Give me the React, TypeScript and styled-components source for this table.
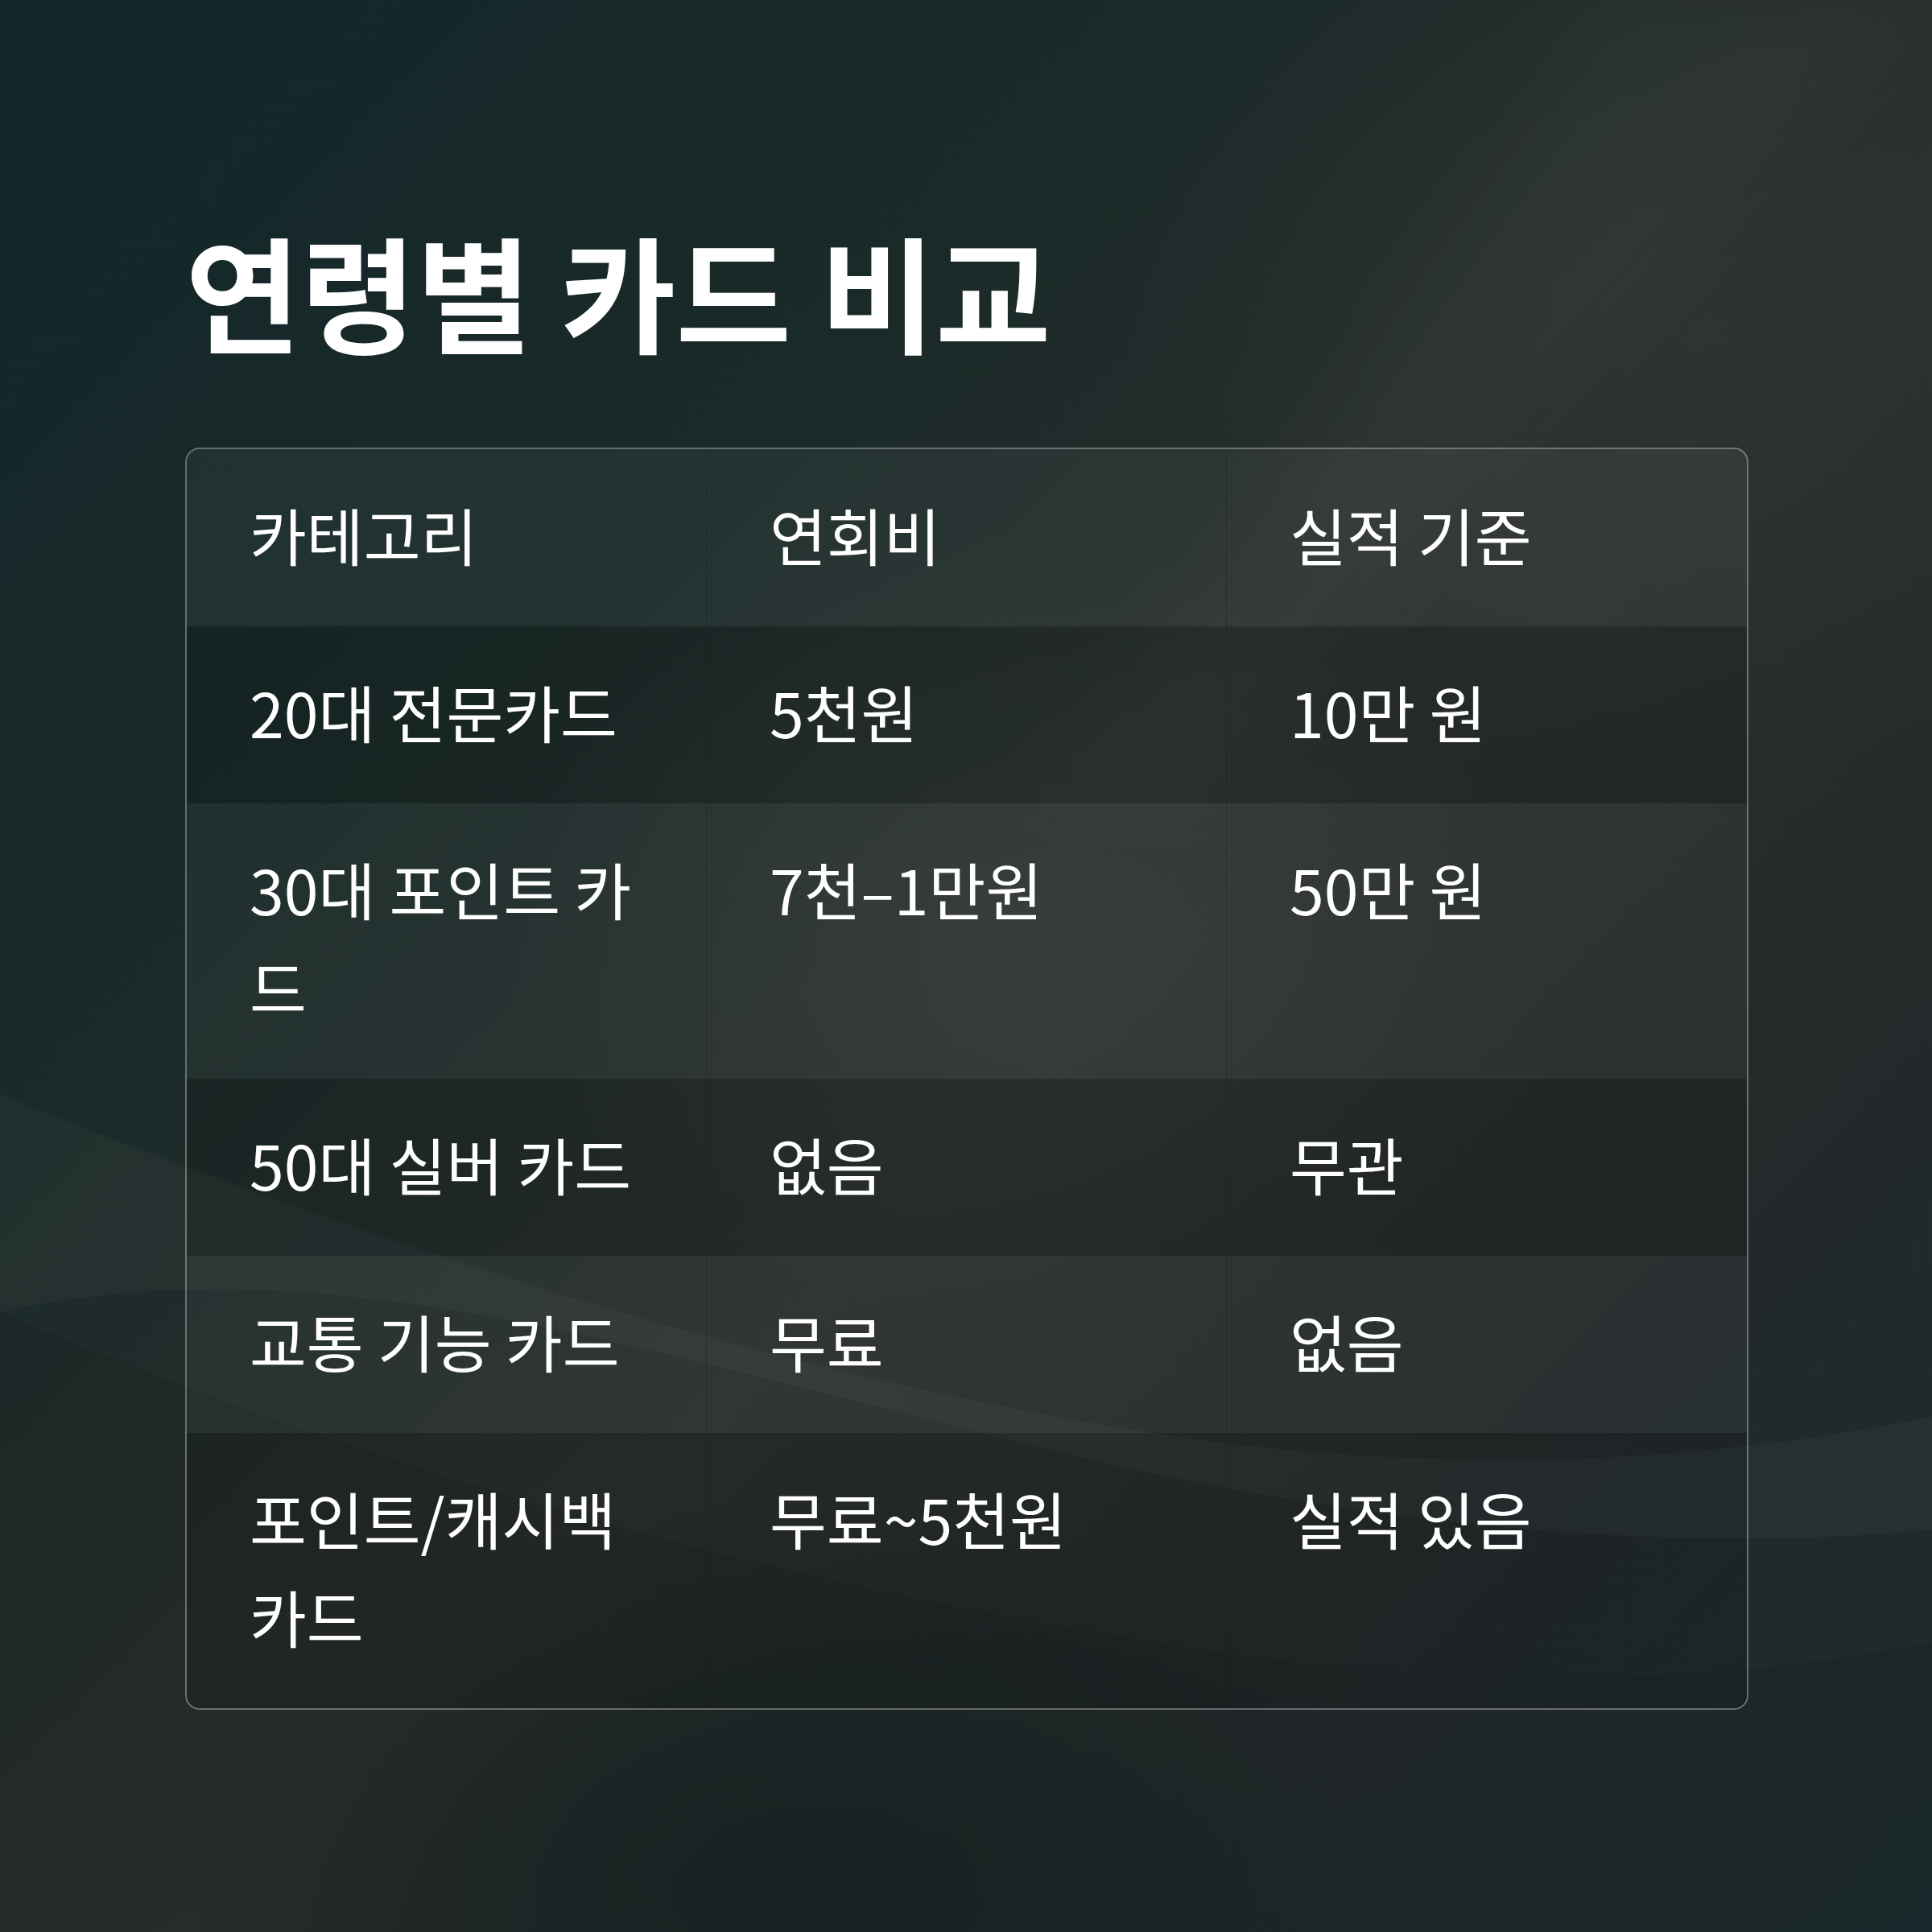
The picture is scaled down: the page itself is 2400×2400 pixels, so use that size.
import React from "react";
import styled, { createGlobalStyle } from "styled-components";

const GlobalStyle = createGlobalStyle`
  html, body { margin: 0; padding: 0; background: #172425; }
  * { box-sizing: border-box; }
`;

const Page = styled.div`
  position: relative;
  width: 2400px;
  height: 2400px;
  overflow: hidden;
  background:
    radial-gradient(ellipse 900px 700px at 1250px 1150px, rgba(70, 72, 72, 0.3), transparent 70%),
    radial-gradient(ellipse 1000px 800px at 2100px 400px, rgba(60, 62, 62, 0.3), transparent 70%),
    radial-gradient(ellipse 1100px 700px at 1000px 2350px, rgba(14, 32, 30, 0.65), transparent 70%),
    linear-gradient(135deg, #12262a 0%, #1a2a28 30%, #2a2e2e 55%, #24292a 75%, #1b2a2d 100%);
  font-family: "Noto Sans CJK KR", "Noto Sans", sans-serif;
  color: #ffffff;
`;

const Waves = styled.svg`
  position: absolute;
  inset: 0;
  width: 2400px;
  height: 2400px;
  pointer-events: none;
`;

const Content = styled.main`
  position: relative;
  display: flex;
  flex-direction: column;
  padding: 266px 228px 0 230px;
`;

const Title = styled.h1`
  margin: 0 0 103px 0;
  font-size: 156px;
  line-height: 1.2;
  font-weight: 700;
  letter-spacing: 0;
  color: #ffffff;
`;

const Table = styled.div`
  width: 1942px;
  border: 2px solid rgba(255, 255, 255, 0.33);
  border-radius: 18px;
  overflow: hidden;
  display: flex;
  flex-direction: column;
`;

const Row = styled.div<{ $tone: "head" | "dark" | "light" }>`
  display: grid;
  grid-template-columns: repeat(3, 1fr);
  background: ${(p) =>
    p.$tone === "head"
      ? "rgba(255, 255, 255, 0.045)"
      : p.$tone === "dark"
      ? "rgba(0, 0, 0, 0.1)"
      : "rgba(255, 255, 255, 0.035)"};
`;

const Cell = styled.div`
  padding: 45px 76px 53px 78px;
  font-size: 77px;
  line-height: 122px;
  font-weight: 400;
  color: #ffffff;
  border-right: 1px solid rgba(0, 0, 0, 0.16);
  word-break: break-all;
  &:last-child {
    border-right: none;
  }
`;

const header = ["카테고리", "연회비", "실적 기준"];
const rows: string[][] = [
  ["20대 전문카드", "5천원", "10만 원"],
  ["30대 포인트 카드", "7천–1만원", "50만 원"],
  ["50대 실버 카드", "없음", "무관"],
  ["교통 기능 카드", "무료", "없음"],
  ["포인트/캐시백 카드", "무료~5천원", "실적 있음"],
];

export default function App() {
  return (
    <>
      <GlobalStyle />
      <Page>
        <Waves viewBox="0 0 2400 2400" xmlns="http://www.w3.org/2000/svg">
          <defs>
            <filter id="soft" x="-20%" y="-20%" width="140%" height="140%">
              <feGaussianBlur stdDeviation="40" />
            </filter>
          </defs>
          <path
            d="M0 1360 C 500 1560, 1000 1720, 1500 1790 C 1900 1840, 2200 1800, 2400 1760 L 2400 1900 C 2100 1930, 1700 1900, 1300 1800 C 800 1680, 400 1540, 0 1630 Z"
            fill="rgba(255,255,255,0.03)"
          />
          <path
            d="M0 1630 C 400 1800, 900 1960, 1500 2050 C 1900 2110, 2200 2080, 2400 2040 L 2400 2400 L 0 2400 Z"
            fill="rgba(0,0,0,0.05)"
          />
          <path
            d="M2000 0 C 1800 300, 1500 700, 1270 1000 L 1500 1000 C 1750 700, 2050 350, 2400 0 Z"
            fill="rgba(255,255,255,0.025)"
            filter="url(#soft)"
          />
        </Waves>
        <Content>
          <Title>연령별 카드 비교</Title>
          <Table>
            <Row $tone="head">
              {header.map((h) => (
                <Cell key={h}>{h}</Cell>
              ))}
            </Row>
            {rows.map((r, i) => (
              <Row key={i} $tone={i % 2 === 0 ? "dark" : "light"}>
                {r.map((c, j) => (
                  <Cell key={j}>{c}</Cell>
                ))}
              </Row>
            ))}
          </Table>
        </Content>
      </Page>
    </>
  );
}
